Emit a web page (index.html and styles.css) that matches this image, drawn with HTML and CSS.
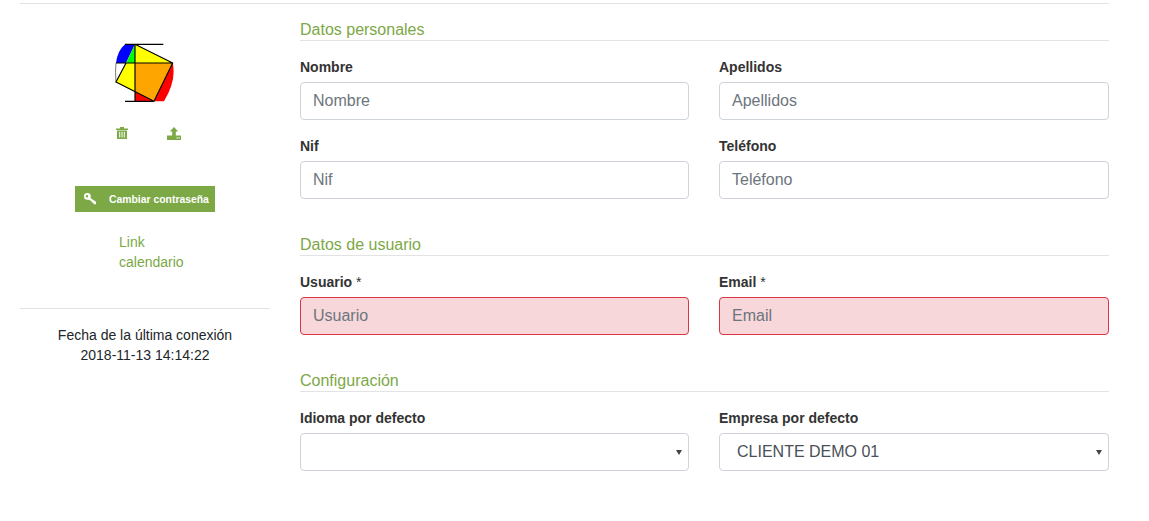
FILE: index.html
```html
<!DOCTYPE html>
<html lang="es">
<head>
<meta charset="UTF-8" />
<title>Perfil de usuario</title>
<link rel="stylesheet" href="styles.css">
</head>
<body>
<div class="page">
  <aside class="side">
    <svg class="logo" viewBox="72 38 186 186" width="62" height="62">
      <path d="M105 42 H135 L108 98 H78 Q82 62 105 42 Z" fill="#0000ff"/>
      <path d="M135 42 V98 H108 Z" fill="#00ff00"/>
      <path d="M135 42 L248 98 H135 Z M108 98 H135 V185 L78 155 Z" fill="#ffff00"/>
      <path d="M135 98 H248 L192 213 L135 185 Z" fill="#ffa500"/>
      <path d="M248 98 Q260 150 222 213 H192 Z M135 185 L192 213 H135 Z" fill="#ff0000"/>
      <path d="M78 98 Q75 126 78 155" fill="none" stroke="#333" stroke-width="2"/>
      <path d="M105 42 H220 M105 213 H190 M135 42 V213 M78 98 H248 M135 42 L248 98 L192 213 L78 155 L108 98" fill="none" stroke="#000" stroke-width="3.5"/>
    </svg>
    <div class="logo-actions">
      <a href="#" class="icon-link" title="Borrar">
        <svg viewBox="0 0 12 12" width="12" height="12"><path d="M4 0H8V1.4H12V3H0V1.4H4Z M1 3.4H11V12H1Z M3.2 4.8V10.6H4.2V4.8Z M5.5 4.8V10.6H6.5V4.8Z M7.8 4.8V10.6H8.8V4.8Z" fill="#7ca846" fill-rule="evenodd"/></svg>
      </a>
      <a href="#" class="icon-link" title="Subir">
        <svg viewBox="0 0 14 13" width="14" height="13"><path d="M7 0L11.2 4.6H8.8V8.4H5.2V4.6H2.8Z M0 8.6H14V13H0Z M9.6 10.2V11.4H10.8V10.2Z M11.6 10.2V11.4H12.8V10.2Z" fill="#7ca846" fill-rule="evenodd"/></svg>
      </a>
    </div>
    <a href="#" class="btn-key">
      <svg viewBox="0 0 12 12" width="12" height="12"><path d="M3.4 0A3.4 3.4 0 1 1 3.4 6.8A3.4 3.4 0 1 1 3.4 0Z M3 2A1.2 1.2 0 1 0 3 4.4A1.2 1.2 0 1 0 3 2Z" fill="#fff" fill-rule="evenodd"/><path d="M5.6 4.4L12 8.8V11.2H9.6V9.8H8V8.8L4.4 6.2Z" fill="#fff"/></svg>
      <span>Cambiar contraseña</span>
    </a>
    <a href="#" class="cal-link">Link calendario</a>
    <div class="last-login">
      <p>Fecha de la última conexión</p>
      <p>2018-11-13 14:14:22</p>
    </div>
  </aside>

  <main class="content">
    <section class="group">
      <h2>Datos personales</h2>
      <div class="row">
        <div class="field"><label>Nombre</label><input type="text" placeholder="Nombre"></div>
        <div class="field"><label>Apellidos</label><input type="text" placeholder="Apellidos"></div>
      </div>
      <div class="row">
        <div class="field"><label>Nif</label><input type="text" placeholder="Nif"></div>
        <div class="field"><label>Teléfono</label><input type="text" placeholder="Teléfono"></div>
      </div>
    </section>

    <section class="group">
      <h2>Datos de usuario</h2>
      <div class="row">
        <div class="field"><label>Usuario <span class="req">*</span></label><input class="invalid" type="text" placeholder="Usuario"></div>
        <div class="field"><label>Email <span class="req">*</span></label><input class="invalid" type="text" placeholder="Email"></div>
      </div>
    </section>

    <section class="group">
      <h2>Configuración</h2>
      <div class="row">
        <div class="field"><label>Idioma por defecto</label><div class="select-wrap"><select><option></option></select></div></div>
        <div class="field"><label>Empresa por defecto</label><div class="select-wrap"><select><option>CLIENTE DEMO 01</option></select></div></div>
      </div>
    </section>
  </main>
</div>
</body>
</html>
```

FILE: styles.css
```css
* {
  box-sizing: border-box;
}
body {
  margin: 0;
  font-family: "Liberation Sans", Arial, sans-serif;
  color: #212529;
  background: #fff;
}
.page {
  display: flex;
  gap: 30px;
  width: 1089px;
  margin: 3px 0 0 20px;
  border-top: 1px solid #e3e3e3;
}
.side {
  width: 250px;
  flex: none;
  display: flex;
  flex-direction: column;
  align-items: center;
  padding-top: 39px;
}
.logo {
  display: block;
}
.logo-actions {
  display: flex;
  align-items: flex-start;
  gap: 39px;
  margin-top: 22px;
  padding-left: 7px;
}
.icon-link {
  display: block;
}
.icon-link svg {
  display: block;
}
.btn-key {
  display: flex;
  align-items: center;
  width: 140px;
  height: 26px;
  margin-top: 46px;
  padding-left: 9px;
  background: #7ca846;
  color: #fff;
  font-size: 10.4px;
  font-weight: 700;
  text-decoration: none;
}
.btn-key span {
  margin-left: 13px;
}
.cal-link {
  display: block;
  width: 80px;
  margin: 20px 0 0 28px;
  color: #7ca846;
  font-size: 14px;
  line-height: 20px;
  text-decoration: none;
}
.last-login {
  width: 100%;
  margin-top: 36px;
  padding-top: 16px;
  border-top: 1px solid #e3e3e3;
  text-align: center;
  font-size: 14px;
  line-height: 20px;
}
.last-login p {
  margin: 0;
}
.content {
  flex: 1;
  padding-top: 16px;
}
.group {
  margin-bottom: 36px;
}
.group h2 {
  margin: 0 0 18px;
  height: 21px;
  border-bottom: 1px solid #e3e3e3;
  color: #7ca846;
  font-size: 16px;
  font-weight: 400;
  line-height: 20px;
}
.row {
  display: grid;
  grid-template-columns: 389px 390px;
  gap: 30px;
  margin-bottom: 18px;
}
.row:last-child {
  margin-bottom: 0;
}
.field label {
  display: block;
  height: 16px;
  margin-bottom: 7px;
  color: #333;
  font-size: 14px;
  font-weight: 700;
  line-height: 16px;
}
.req {
  font-weight: 400;
}
.field input,
.field select {
  display: block;
  width: 100%;
  height: 38px;
  padding: 6px 12px;
  border: 1px solid #ced4da;
  border-radius: 4px;
  background: #fff;
  color: #495057;
  font-family: inherit;
  font-size: 16px;
}
.field select {
  padding: 5px 12px 7px 17px;
  appearance: none;
}
.select-wrap {
  position: relative;
}
.select-wrap::after {
  content: "";
  position: absolute;
  top: 17px;
  right: 7px;
  border-top: 5px solid #444;
  border-left: 3px solid transparent;
  border-right: 3px solid transparent;
}
.field input::placeholder {
  color: #6c757d;
}
.field input.invalid {
  background: #f8d7da;
  border-color: #dc3545;
}
```
